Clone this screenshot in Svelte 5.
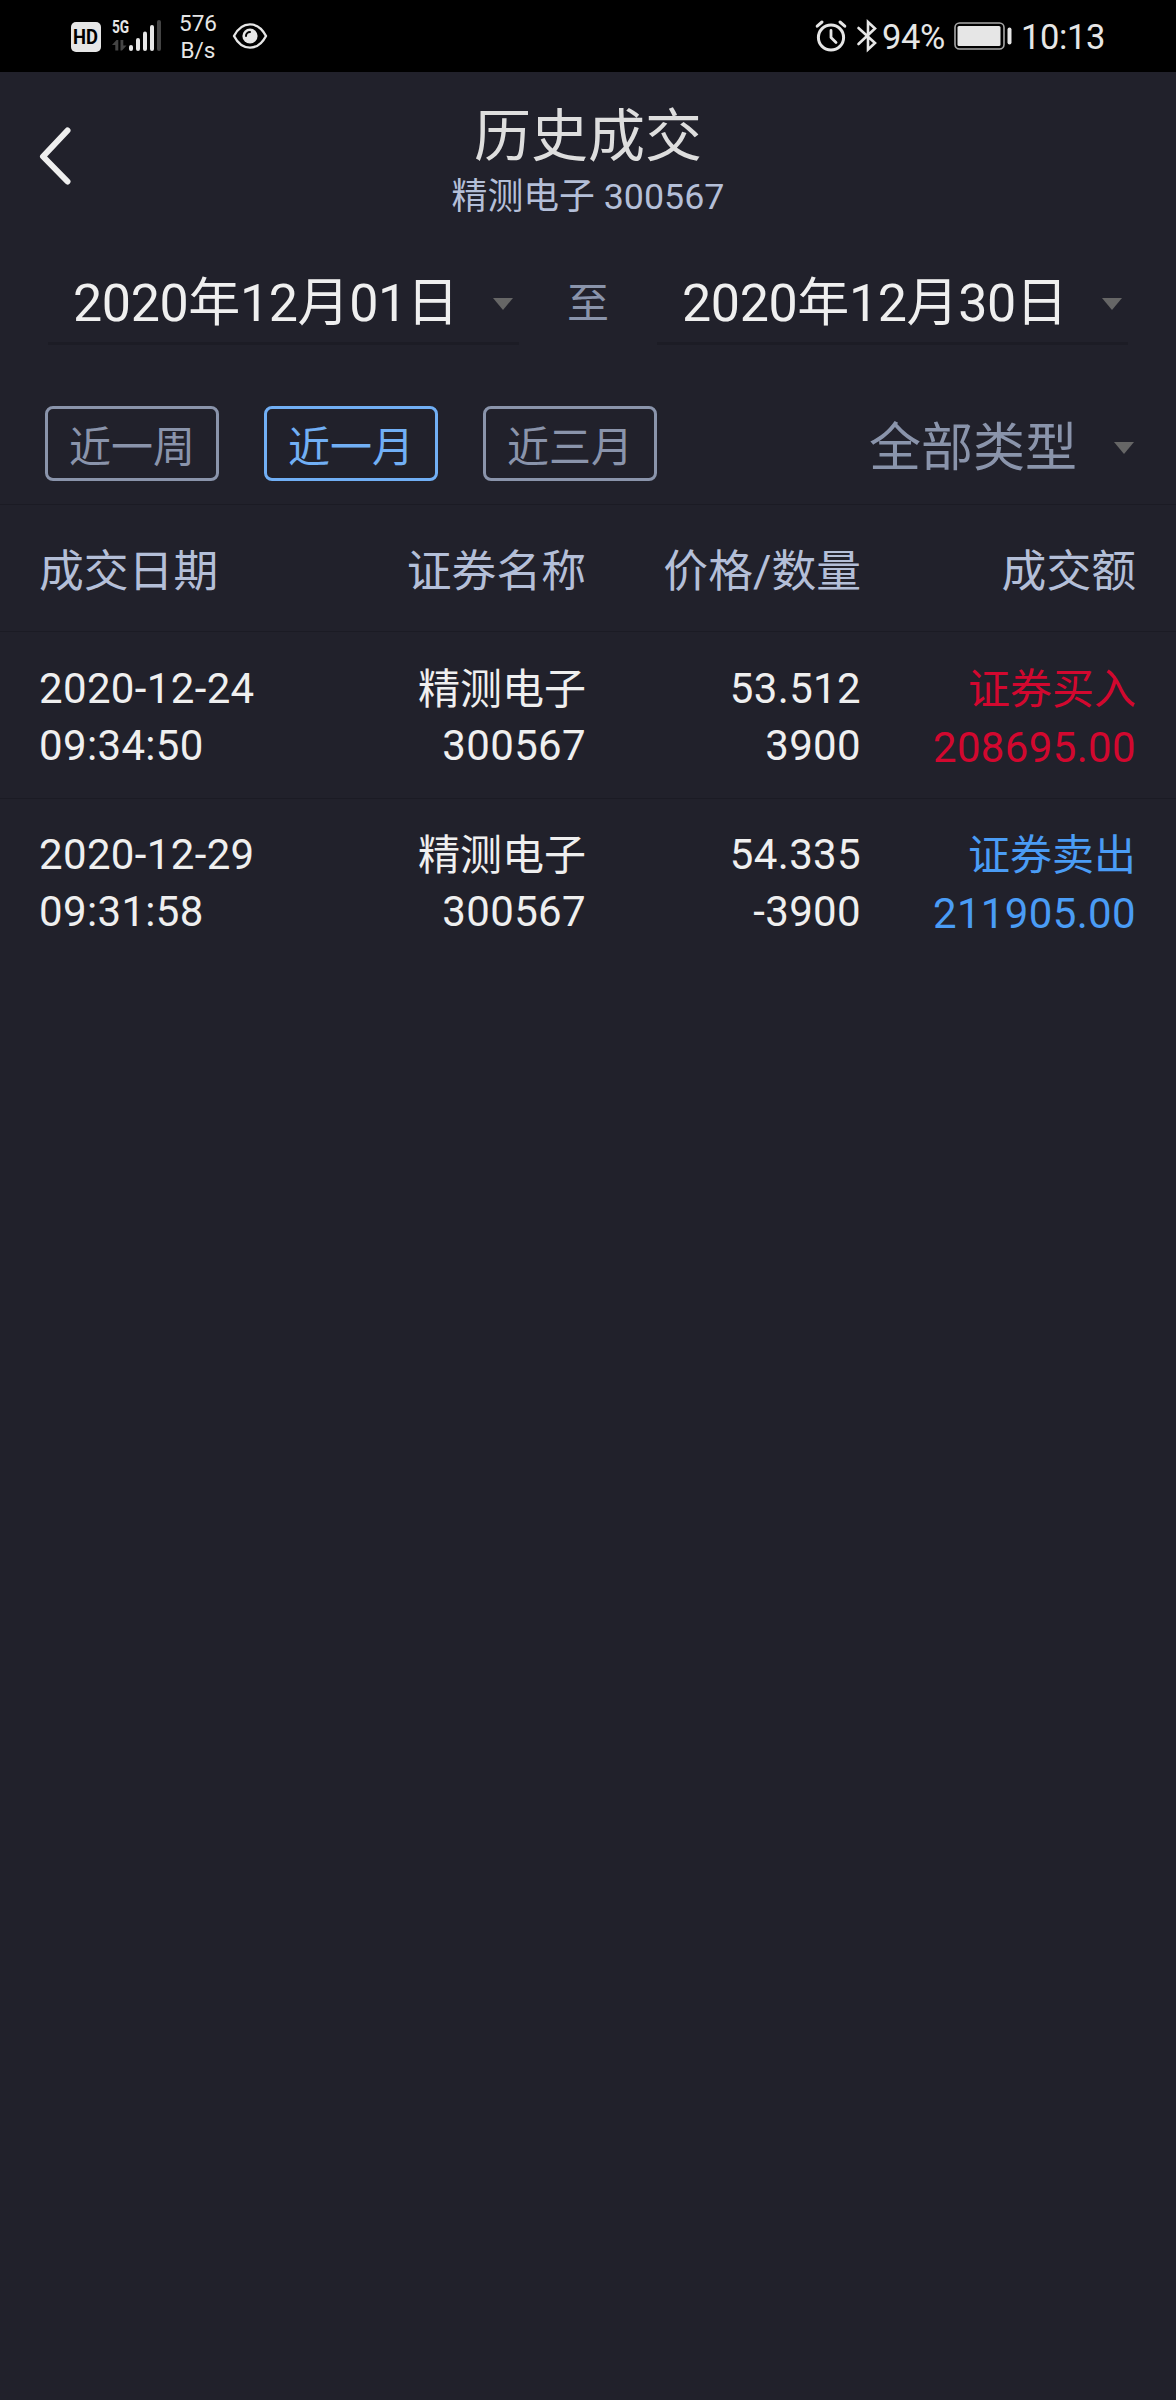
<script>
    const ranges = ["近一周", "近一月", "近三月"];
    let activeRange = $state("近一月");

    const columns = ["成交日期", "证券名称", "价格/数量", "成交额"];

    const deals = [
        {
            date: "2020-12-24",
            time: "09:34:50",
            name: "精测电子",
            code: "300567",
            price: "53.512",
            count: "3900",
            type: "证券买入",
            amount: "208695.00",
            side: "buy",
        },
        {
            date: "2020-12-29",
            time: "09:31:58",
            name: "精测电子",
            code: "300567",
            price: "54.335",
            count: "-3900",
            type: "证券卖出",
            amount: "211905.00",
            side: "sell",
        },
    ];
</script>

<div class="screen">
    <div class="status-bar">
        <div class="status-left">
            <span class="hd"><b>HD</b></span>
            <div class="signal">
                <span class="network">5G</span>
                <svg width="50" height="32" viewBox="0 0 50 32">
                    <g fill="#444">
                        <path d="M0 25 L4.5 20 H6.3 V30.5 H3.3 V25 Z" />
                        <path d="M8.5 20 H11.3 V25.5 H14.5 L10 30.5 H8.5 Z" />
                        <rect x="45" y="0" width="4" height="31" rx="2" />
                    </g>
                    <g fill="#e6e6e6">
                        <rect x="17" y="25" width="4" height="6" rx="2" />
                        <rect x="24" y="18" width="4" height="13" rx="2" />
                        <rect x="31" y="11.5" width="4" height="19.5" rx="2" />
                        <rect x="38" y="5" width="4" height="26" rx="2" />
                    </g>
                </svg>
            </div>
            <div class="speed">
                <span>576</span>
                <span>B/s</span>
            </div>
            <svg width="36" height="28" viewBox="0 0 36 28">
                <path
                    d="M2 14 C10 -1.5 26 -1.5 34 14 C26 29.5 10 29.5 2 14 Z"
                    fill="none"
                    stroke="#e6e6e6"
                    stroke-width="2.4"
                    stroke-linejoin="round"
                />
                <circle cx="18" cy="14" r="7.6" fill="#e6e6e6" />
                <path
                    d="M14 14 A4 4 0 0 1 18 10"
                    fill="none"
                    stroke="#000"
                    stroke-width="2"
                    stroke-linecap="round"
                />
            </svg>
        </div>
        <div class="status-right">
            <svg class="alarm" width="32" height="34" viewBox="0 0 32 34">
                <g
                    fill="none"
                    stroke="#e6e6e6"
                    stroke-linecap="round"
                    stroke-linejoin="round"
                >
                    <circle cx="16" cy="18.5" r="12.6" stroke-width="3" />
                    <path d="M16 11.5 V18.5 L21 23.5" stroke-width="2.8" />
                    <path
                        d="M2.2 7.2 L7 3 M29.8 7.2 L25 3"
                        stroke-width="3"
                    />
                </g>
            </svg>
            <svg class="bluetooth" width="22" height="34" viewBox="0 0 22 34">
                <path
                    d="M2.5 9 L19 24 L12 30.5 V3 L19 9.5 L2.5 25"
                    fill="none"
                    stroke="#e6e6e6"
                    stroke-width="2.6"
                    stroke-linecap="round"
                    stroke-linejoin="miter"
                />
            </svg>
            <span class="percent">94%</span>
            <svg class="battery" width="58" height="28" viewBox="0 0 58 28">
                <rect
                    x="1"
                    y="1"
                    width="49"
                    height="26"
                    rx="4.5"
                    fill="none"
                    stroke="#a8a8a8"
                    stroke-width="1.6"
                />
                <rect x="3.5" y="4" width="43" height="20" rx="1.5" fill="#e6e6e6" />
                <rect x="53.5" y="5.5" width="4" height="17" rx="2" fill="#e6e6e6" />
            </svg>
            <span class="clock">10:13</span>
        </div>
    </div>

    <header>
        <button class="back" aria-label="返回">
            <svg width="32" height="58" viewBox="0 0 32 58">
                <path
                    d="M28.5 3.5 L4 29.5 L28.5 54.5"
                    fill="none"
                    stroke="#efefef"
                    stroke-width="6"
                    stroke-linecap="round"
                    stroke-linejoin="round"
                />
            </svg>
        </button>
        <div class="titles">
            <h1>历史成交</h1>
            <p>精测电子 300567</p>
        </div>
    </header>

    <div class="dates">
        <div class="date-field">
            <span>2020年12月01日</span>
            <i class="arrow"></i>
        </div>
        <span class="to">至</span>
        <div class="date-field">
            <span>2020年12月30日</span>
            <i class="arrow"></i>
        </div>
    </div>

    <div class="filters">
        {#each ranges as range}
            <button
                class="range"
                class:active={activeRange === range}
                onclick={() => (activeRange = range)}
            >
                {range}
            </button>
        {/each}
        <div class="type">
            <span>全部类型</span>
            <i class="arrow"></i>
        </div>
    </div>

    <div class="table-head">
        {#each columns as column}
            <span>{column}</span>
        {/each}
    </div>

    {#each deals as deal}
        <div class="deal">
            <div class="cell">
                <span>{deal.date}</span>
                <span>{deal.time}</span>
            </div>
            <div class="cell">
                <span class="cn">{deal.name}</span>
                <span>{deal.code}</span>
            </div>
            <div class="cell">
                <span>{deal.price}</span>
                <span>{deal.count}</span>
            </div>
            <div class="cell total {deal.side}">
                <span class="cn">{deal.type}</span>
                <span>{deal.amount}</span>
            </div>
        </div>
    {/each}
</div>

<style>
    :global(body) {
        background: #21212b;
    }

    .screen {
        width: 1176px;
        height: 2400px;
        overflow: hidden;
        background: #21212b;
        color: #efefef;
        font-family: Roboto, "Noto Sans CJK SC", sans-serif;
    }

    .screen * {
        box-sizing: border-box;
    }

    button {
        padding: 0;
        border: none;
        background: none;
        font-family: inherit;
    }

    svg {
        display: block;
        flex: none;
    }

    /* 状态栏 */
    .status-bar {
        display: flex;
        justify-content: space-between;
        align-items: center;
        height: 72px;
        padding: 0 71px;
        background: #000;
        color: #e6e6e6;
        font-size: 34.5px;
    }

    .status-left,
    .status-right {
        display: flex;
        align-items: center;
    }

    .hd {
        display: flex;
        justify-content: center;
        width: 30px;
        height: 30px;
        margin-top: 2px;
        border-radius: 5px;
        background: #e6e6e6;
        color: #000;
        font-size: 20px;
        line-height: 31px;
    }

    .hd b {
        transform: scaleX(0.92);
    }

    .signal {
        position: relative;
        margin-left: 11px;
    }

    .network {
        position: absolute;
        left: 0;
        top: -1px;
        font-size: 19px;
        font-weight: 700;
        line-height: 16px;
        transform: scaleX(0.72);
        transform-origin: left;
    }

    .speed {
        display: flex;
        flex-direction: column;
        width: 38px;
        margin-left: 17px;
        padding-top: 2px;
        font-size: 22.5px;
        line-height: 27px;
        text-align: center;
    }

    .speed + svg {
        margin-left: 15px;
    }

    .bluetooth {
        margin-left: 9px;
    }

    .percent {
        margin-left: 4px;
        padding-top: 2px;
        letter-spacing: -0.3px;
    }

    .battery {
        margin: 0 9px;
    }

    .clock {
        padding-top: 2px;
        letter-spacing: -0.4px;
    }

    /* 标题 */
    header {
        position: relative;
        height: 189px;
        padding-top: 30px;
    }

    .back {
        position: absolute;
        left: 39px;
        top: 55px;
    }

    .titles {
        text-align: center;
    }

    h1 {
        margin: 0;
        color: #dedede;
        font-size: 57px;
        font-weight: 400;
        line-height: 70px;
    }

    p {
        margin: 3px 0 0;
        color: #b4bfd8;
        font-size: 35.8px;
        line-height: 44px;
    }

    /* 日期选择 */
    .dates {
        display: flex;
        justify-content: space-between;
        align-items: center;
        height: 84px;
        padding: 0 48px;
    }

    .date-field {
        display: flex;
        justify-content: space-between;
        align-items: center;
        width: 471px;
        height: 84px;
        padding: 0 6px 0 25px;
        border-bottom: 3px solid #1c1c25;
        font-size: 52px;
        line-height: 60px;
        letter-spacing: -0.4px;
    }

    .date-field span {
        margin-top: 4px;
    }

    .arrow {
        margin-top: 4px;
        border: 10.5px solid transparent;
        border-top: 12px solid #666;
        border-bottom: 0;
    }

    .to {
        margin-bottom: 7px;
        color: #8a94ab;
        font-size: 42px;
    }

    /* 筛选 */
    .filters {
        display: flex;
        align-items: center;
        gap: 45px;
        height: 160px;
        padding: 61px 42px 23px 45px;
        border-bottom: 1px solid #1b1b24;
    }

    .range {
        width: 174px;
        height: 75px;
        padding-bottom: 1px;
        border: 3px solid #8a94ab;
        border-radius: 8px;
        color: #8a94ab;
        font-size: 42px;
    }

    .range.active {
        border-color: #71aff5;
        color: #71aff5;
    }

    .type {
        display: flex;
        align-items: center;
        gap: 37px;
        margin-left: auto;
        color: #8a94ab;
        font-size: 52px;
    }

    .type .arrow {
        margin-top: 8px;
    }

    /* 成交列表 */
    .table-head,
    .deal {
        display: grid;
        grid-template-columns: 273px 274px 275px 275px;
        padding: 0 0 0 39px;
        border-bottom: 1px solid #1b1b24;
        text-align: right;
    }

    .table-head {
        height: 127px;
        color: #b4bfd8;
        font-size: 44.8px;
        line-height: 133px;
    }

    .table-head span:first-child,
    .cell:first-child {
        text-align: left;
    }

    .deal {
        height: 167px;
        padding-top: 28px;
        font-size: 42px;
        line-height: 57px;
        letter-spacing: 0.35px;
    }

    .deal:last-child {
        padding-top: 27px;
        border-bottom: none;
    }

    .cell {
        display: flex;
        flex-direction: column;
    }

    .cn {
        padding-top: 1px;
        margin-bottom: -1px;
        letter-spacing: 0;
    }

    .total {
        gap: 2px;
    }

    .buy {
        color: #d2082f;
    }

    .sell {
        color: #4a9cf5;
    }
</style>
